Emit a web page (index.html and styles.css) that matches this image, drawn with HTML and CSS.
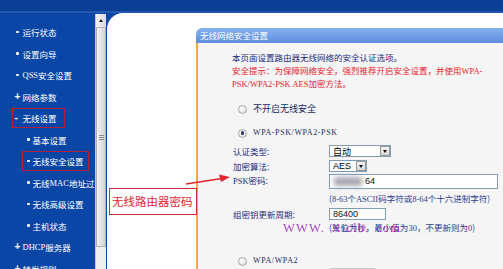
FILE: index.html
```html
<!DOCTYPE html>
<html lang="zh-CN">
<head>
<meta charset="utf-8">
<title>无线网络安全设置</title>
<link rel="stylesheet" href="styles.css">
</head>
<body>
<div class="topbar"></div>
<div class="frame">
  <nav class="sidebar">
    <ul class="menu">
      <li class="top"><span class="item"><span class="mk dot"></span>运行状态</span></li>
      <li class="top"><span class="item"><span class="mk dot"></span>设置向导</span></li>
      <li class="top"><span class="item"><span class="mk dot"></span><span class="lat">QSS</span>安全设置</span></li>
      <li class="top"><span class="item"><span class="mk sign">+</span>网络参数</span></li>
      <li class="top"><span class="item hl"><span class="mk sign">-</span>无线设置</span></li>
      <li class="sub"><span class="item"><span class="mk dot"></span>基本设置</span></li>
      <li class="sub"><span class="item hl"><span class="mk dot"></span>无线安全设置</span></li>
      <li class="sub"><span class="item"><span class="mk dot"></span>无线<span class="lat">MAC</span>地址过滤</span></li>
      <li class="sub"><span class="item"><span class="mk dot"></span>无线高级设置</span></li>
      <li class="sub"><span class="item"><span class="mk dot"></span>主机状态</span></li>
      <li class="top"><span class="item"><span class="mk sign">+</span><span class="lat">DHCP</span>服务器</span></li>
      <li class="top"><span class="item"><span class="mk sign">+</span>转发规则</span></li>
    </ul>
  </nav>
  <div class="scrollbar">
    <div class="sb-up"><span class="tri"></span></div>
    <div class="sb-thumb"><span class="grip"></span></div>
  </div>
  <main class="main">
    <section class="panel">
      <div class="panel-head">无线网络安全设置</div>
      <div class="panel-body">
        <p class="intro">本页面设置路由器无线网络的安全认证选项。</p>
        <p class="warn">安全提示：为保障网络安全，强烈推荐开启安全设置，并使用<span class="lat">WPA-</span><br><span class="lat">PSK/WPA2-PSK AES</span>加密方法。</p>
        <div class="radio-row r1"><span class="radio"></span>不开启无线安全</div>
        <div class="radio-row r2"><span class="radio on"></span><span class="lat small">WPA-PSK/WPA2-PSK</span></div>
        <div class="form">
          <div class="frow h15"><span class="lbl">认证类型:</span><span class="select w62"><span class="sval">自动</span><span class="sbtn"></span></span></div>
          <div class="frow h15"><span class="lbl">加密算法:</span><span class="select w38"><span class="sval sans">AES</span><span class="sbtn"></span></span></div>
          <div class="frow h15"><span class="lbl"><span class="lat">PSK</span>密码:</span><span class="input w169"><span class="blur"></span><span class="sans">64</span></span></div>
          <div class="frow hint"><span class="lbl"></span><span class="note">(<span class="lat">8-63</span>个<span class="lat">ASCII</span>码字符或<span class="lat">8-64</span>个十六进制字符)</span></div>
          <div class="frow h13"><span class="lbl">组密钥更新周期:</span><span class="input w57 short"><span class="sans">86400</span></span></div>
          <div class="frow h15"><span class="lbl"></span><span class="note">(单位为秒，最小值为<span class="lat">30</span>，不更新则为<span class="lat">0</span>)</span></div>
        </div>
        <div class="radio-row r3"><span class="radio"></span><span class="lat small">WPA/WPA2</span></div>
        <div class="frow next"><span class="lbl"></span><span class="ghost"></span><span class="ghost2"></span></div>
        <div class="watermark">WWW. Xiclb. com</div>
      </div>
    </section>
  </main>
</div>
<div class="callout">无线路由器密码</div>
<svg class="arrow" width="50" height="16" viewBox="0 0 50 16">
  <line x1="2" y1="12" x2="38" y2="6.5" stroke="#e0262e" stroke-width="1.6"/>
  <polygon points="46,5 35,2.5 37,10" fill="#e0262e"/>
</svg>
</body>
</html>
```

FILE: styles.css
```css
* { box-sizing: border-box; margin: 0; padding: 0; }
html, body { width: 503px; height: 269px; overflow: hidden; }
body {
  position: relative;
  background: #0a46a6;
  font-family: "Noto Sans CJK SC", sans-serif;
  font-size: 8.5px;
}
.lat { font-family: "Liberation Serif", serif; }
.sans { font-family: "Liberation Sans", sans-serif; }

.topbar {
  height: 13px;
  background: linear-gradient(#0a3f96 0, #0a3f96 11px, #3c6cc0 12px, #0a46a6 13px);
}
.frame {
  display: flex;
  height: 256px;
  background: #0a46a6;
}

/* sidebar */
.sidebar {
  width: 95px;
  flex: none;
  overflow: hidden;
  padding-top: 8.25px;
  color: #ffffff;
}
.menu { list-style: none; }
.menu li {
  height: 21.5px;
  display: flex;
  align-items: center;
  white-space: nowrap;
}
.menu li.top { padding-left: 12px; }
.menu li.sub { padding-left: 22px; }
.item {
  display: inline-flex;
  align-items: center;
  height: 20px;
  border: 1.5px solid transparent;
  padding-left: 1.5px;
  padding-right: 7px;
  line-height: 12px;
}
.sub .item { padding-left: 3.5px; padding-right: 4.5px; }
.item.hl { border-color: #b41e3c; }
.mk { flex: none; width: 8px; display: inline-flex; align-items: center; }
.sub .mk { width: 6px; }
.mk.dot::before {
  content: "";
  width: 2.5px; height: 2.5px;
  border-radius: 50%;
  background: #ffffff;
  margin-left: 0.5px;
}
.top .mk.dot::before { margin-left: 1.5px; }
.mk.sign { font-family: "Liberation Sans", sans-serif; font-size: 10px; font-weight: bold; line-height: 10px; }

/* scrollbar */
.scrollbar {
  width: 11px;
  flex: none;
  display: flex;
  flex-direction: column;
  background: #eeeeee;
  margin-top: 1px;
  border-left: 1px solid #c9c9c9;
}
.sb-up {
  height: 14px;
  background: linear-gradient(90deg, #f4f4f4, #d8d8d8);
  border-bottom: 1px solid #b8b8b8;
  display: flex;
  align-items: center;
  justify-content: center;
}
.tri {
  width: 0; height: 0;
  border-left: 2.5px solid transparent;
  border-right: 2.5px solid transparent;
  border-bottom: 3px solid #222;
}
.sb-thumb {
  height: 219px;
  background: linear-gradient(90deg, #f2f2f2, #d4d4d4);
  border: 1px solid #b0b0b0;
  border-top: 0;
  display: flex;
  align-items: center;
  justify-content: center;
}
.grip {
  width: 5px; height: 5px;
  background: repeating-linear-gradient(#8c8c8c 0 1px, transparent 1px 2px);
}

/* main */
.main {
  flex: 1;
  margin-left: 1px;
  background: #ffffff;
  border-top-left-radius: 16px;
  padding-top: 15px;
  padding-left: 89px;
  display: flex;
}
.panel {
  flex: 1;
  display: flex;
  flex-direction: column;
}
.panel-head {
  height: 15px;
  line-height: 15px;
  padding-left: 4px;
  color: #ffffff;
  background: linear-gradient(#86b0ee, #5f90de);
  border-top-left-radius: 6px;
}
.panel-body {
  position: relative;
  flex: 1;
  background: #f5f5f6;
  border-left: 2px solid #f3a742;
  padding-top: 8px;
  padding-left: 34px;
  color: #1b2c7a;
  line-height: 12.5px;
  white-space: nowrap;
}
.warn { color: #e4222c; }
.radio-row {
  height: 13px;
  display: flex;
  align-items: center;
  padding-left: 6px;
  color: #1b2a60;
  font-size: 9px;
}
.r1 { margin-top: 12px; }
.r2 { margin-top: 11px; }
.r3 { margin-top: 19px; }
.radio {
  width: 9px; height: 9px;
  border-radius: 50%;
  border: 1px solid #a8a8a8;
  background: radial-gradient(circle at 35% 35%, #ffffff, #d6d6d6);
  margin-right: 6px;
  display: inline-flex;
  align-items: center;
  justify-content: center;
}
.radio.on::after {
  content: "";
  width: 3.5px; height: 3.5px;
  border-radius: 50%;
  background: #2a3a5a;
}
.small { font-size: 8px; letter-spacing: 0.6px; }

.form { margin-top: 4px; }
.frow { display: flex; align-items: center; }
.h15 { height: 15px; }
.h13 { height: 13px; }
.hint { height: 19px; padding-top: 2px; }
.lbl { width: 97px; flex: none; padding-left: 1px; }
.note { color: #2a3c8c; }
.select {
  height: 11.5px;
  display: inline-flex;
  align-items: center;
  justify-content: space-between;
  background: #ffffff;
  border: 1px solid #7f9db9;
  color: #000;
  padding-left: 3px;
}
.w62 { width: 62px; }
.w38 { width: 38px; }
.sval { font-size: 9px; line-height: 9px; }
.sbtn {
  width: 10px; height: 9.5px;
  margin-right: 0.5px;
  background: linear-gradient(#f4f4f4, #d6d6d6);
  border: 1px solid #9a9a9a;
  display: inline-flex;
  align-items: center;
  justify-content: center;
}
.sbtn::after {
  content: "";
  border-left: 2.5px solid transparent;
  border-right: 2.5px solid transparent;
  border-top: 3px solid #111;
}
.input {
  height: 15px;
  display: inline-flex;
  align-items: center;
  background: #ffffff;
  border: 1px solid #7f9db9;
  color: #111;
  font-size: 9px;
  padding-left: 4px;
}
.w169 { width: 169px; }
.w57 { width: 57px; }
.short { height: 12.5px; padding-left: 3px; }
.blur {
  width: 28px; height: 9px;
  background: #a8a8b0;
  filter: blur(2.5px);
  margin-right: 3px;
}
.next { height: 6px; margin-top: 0.5px; align-items: flex-start; }
.ghost {
  width: 47px; height: 6px;
  border: 1px solid #c8c8c8;
  border-bottom: 0;
  border-radius: 2px 2px 0 0;
  background: #ffffff;
}
.ghost2 {
  width: 14px; height: 4px;
  margin-left: 31px;
  margin-top: 2px;
  border-radius: 50% 50% 0 0;
  background: #d6d6d6;
}
.watermark {
  position: absolute;
  left: 85px;
  top: 178px;
  font-family: "Liberation Serif", serif;
  font-size: 12.5px;
  line-height: 14px;
  letter-spacing: 1.2px;
  word-spacing: 2px;
  color: #a028c0;
  opacity: 0.85;
}

/* annotation overlay */
.callout {
  position: absolute;
  left: 109px;
  top: 188px;
  width: 88px;
  height: 27px;
  border: 1.5px solid #d0283a;
  background: #ffffff;
  color: #e02432;
  font-size: 11.5px;
  line-height: 24px;
  padding-left: 2px;
  white-space: nowrap;
}
.arrow {
  position: absolute;
  left: 184px;
  top: 172px;
}
```
